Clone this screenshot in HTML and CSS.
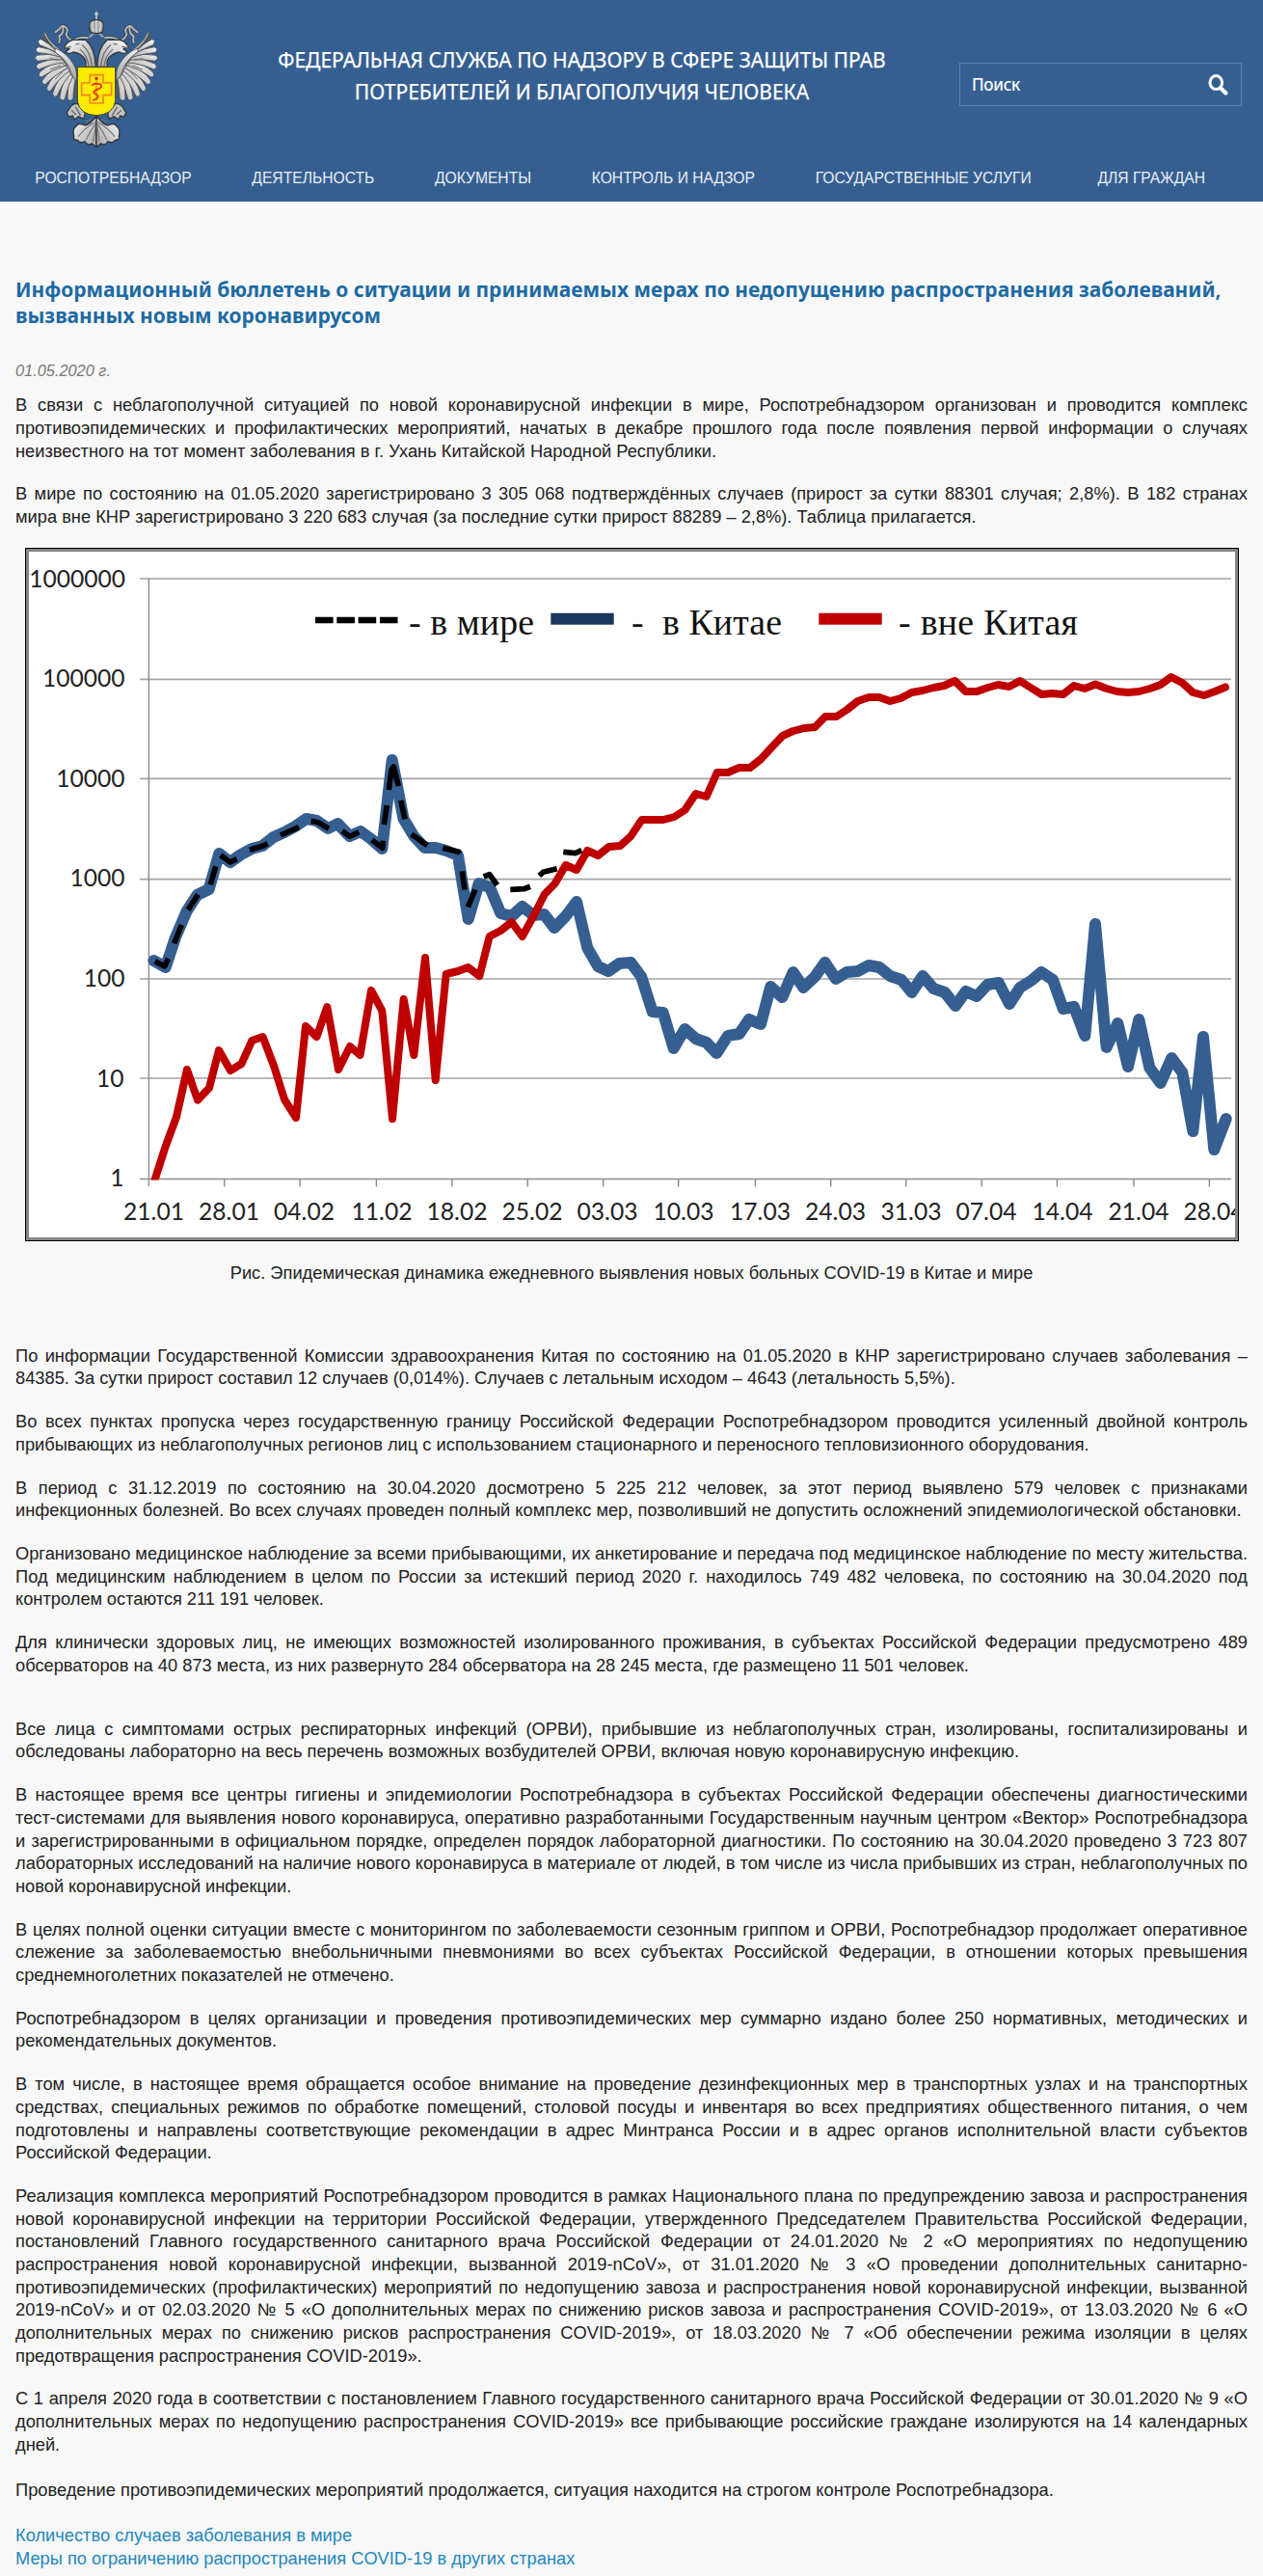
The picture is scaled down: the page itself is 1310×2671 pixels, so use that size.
FILE: index.html
```html
<!DOCTYPE html>
<html lang="ru">
<head>
<meta charset="utf-8">
<title>Информационный бюллетень</title>
<link rel="stylesheet" href="styles.css">
</head>
<body>
<header class="header">
  <div class="header-top">
    <svg class="logo" viewBox="0 0 480 480" role="img" aria-label="Герб">
      <defs>
        <linearGradient id="silver" x1="0" y1="0" x2="1" y2="1">
          <stop offset="0" stop-color="#fafafa"/><stop offset="1" stop-color="#a6a6a6"/>
        </linearGradient>
        <g id="half" stroke-linejoin="round" stroke-linecap="round">
          <!-- ribbon -->
          <path d="M213 118 Q190 112 172 124 M160 124 Q140 112 150 96 Q148 82 134 80 Q126 92 112 100 M136 82 Q140 104 124 112 Q128 124 124 132" fill="none" stroke="#2f3a48" stroke-width="10"/>
          <path d="M213 118 Q190 112 172 124 M160 124 Q140 112 150 96 Q148 82 134 80 Q126 92 112 100 M136 82 Q140 104 124 112 Q128 124 124 132" fill="none" stroke="#b5b5b5" stroke-width="6"/>
          <!-- wing -->
          <path d="M74 98 Q84 130 118 152 Q165 185 178 225 L176 300 L150 300 L100 250 L70 150Z" fill="#55585c"/>
          <g fill="url(#silver)" stroke="#44484d" stroke-width="2.5">
            <path d="M178 232 Q170 262 168 306 Q158 320 150 306 Q150 262 160 226Z"/>
            <path d="M172 228 Q152 262 142 308 Q130 318 126 302 Q132 256 158 220Z"/>
            <path d="M166 224 Q136 254 118 298 Q106 306 104 290 Q116 248 152 214Z"/>
            <path d="M160 218 Q122 244 98 282 Q86 288 86 272 Q102 234 146 206Z"/>
            <path d="M154 210 Q112 232 82 262 Q68 264 72 250 Q92 218 140 196Z"/>
            <path d="M148 202 Q104 216 70 240 Q56 238 64 224 Q90 200 134 188Z"/>
            <path d="M142 194 Q96 200 62 216 Q46 210 58 198 Q90 184 128 180Z"/>
            <path d="M136 186 Q92 184 58 190 Q42 180 56 172 Q90 166 122 172Z"/>
            <path d="M130 178 Q88 166 58 164 Q44 152 60 146 Q92 150 118 164Z"/>
            <path d="M126 170 Q88 148 64 140 Q52 124 68 122 Q94 136 114 156Z"/>
            <path d="M122 162 Q86 130 74 98 Q82 100 86 112 Q98 136 128 154Z"/>
            <path d="M112 150 Q150 165 170 202 Q182 222 177 252 Q160 236 152 212 Q142 182 112 162Z"/>
          </g>
          <path d="M124 172 Q150 190 160 220 M136 198 Q160 215 168 240 M120 186 L96 182 M128 204 L98 216 M140 218 L112 246" stroke="#6b6e72" stroke-width="3" fill="none"/>
          <!-- claw -->
          <path d="M180 322 Q166 322 158 334 L148 350 L154 364 L166 360 L172 372 L184 362 L200 370 L205 354 Q196 334 180 322Z" fill="#c4c4c4" stroke="#33373c" stroke-width="4"/>
          <path d="M164 344 L176 356 M176 334 L190 358" stroke="#666" stroke-width="4" fill="none"/>
          <!-- head and neck -->
          <path d="M140 148 Q148 128 168 124 L206 124 Q236 150 238 208 L206 208 Q212 184 190 170 Q176 162 168 162 Q154 170 144 162 L156 152Z" fill="url(#silver)" stroke="#33373c" stroke-width="4"/>
          <path d="M142 149 L160 145 M176 138 L186 136 M196 140 Q222 160 226 206 M190 154 Q212 172 216 206" stroke="#666" stroke-width="3.5" fill="none"/>
          <!-- tail -->
          <path d="M240 360 Q222 386 204 390 Q182 380 178 392 Q164 400 170 424 Q166 436 182 436 Q190 448 204 440 Q214 456 226 446 L240 458Z" fill="url(#silver)" stroke="#33373c" stroke-width="4"/>
          <path d="M234 380 Q200 402 184 424 M236 386 Q218 412 208 434 M238 390 L230 440 M222 372 L208 378" stroke="#777" stroke-width="3.5" fill="none"/>
        </g>
      </defs>
      <use href="#half"/>
      <use href="#half" transform="translate(480 0) scale(-1 1)"/>
      <path d="M218 116 L232 103 L248 103 L262 116" fill="none" stroke="#b0b0b0" stroke-width="5"/>
      <path d="M222 100 Q212 70 226 64 L240 60 L254 64 Q268 70 258 100 Q240 108 222 100Z" fill="#aaa" stroke="#33373c" stroke-width="4"/>
      <path d="M229 68 Q224 84 230 98 M251 68 Q256 84 250 98 M240 64 V100" fill="none" stroke="#ececec" stroke-width="3"/>
      <path d="M240 36 V60 M234 44 H246" stroke="#c8c8c8" stroke-width="5"/>
      <path d="M181 209 H299 V315 Q292 357 240 359 Q188 357 181 315Z" fill="#fcec00" stroke="#45401c" stroke-width="3"/>
      <path d="M220 233 H261 V258 H287 V296 H261 V321 H220 V296 H194 V258 H220Z" fill="none" stroke="#f5841f" stroke-width="5"/>
      <path d="M240 240 V312" stroke="#f26a1b" stroke-width="3"/>
      <circle cx="240" cy="244" r="5" fill="#e01010"/>
      <path d="M226 266 Q234 256 252 262 Q262 270 246 277 Q224 284 236 292 Q252 296 240 308 L228 312" fill="none" stroke="#e8291a" stroke-width="5"/>
    </svg>
    <div class="agency">ФЕДЕРАЛЬНАЯ СЛУЖБА ПО НАДЗОРУ В СФЕРЕ ЗАЩИТЫ ПРАВ<br>ПОТРЕБИТЕЛЕЙ И БЛАГОПОЛУЧИЯ ЧЕЛОВЕКА</div>
    <div class="search">
      <span>Поиск</span>
      <svg class="search-icon" viewBox="0 0 21 22"><ellipse cx="8.3" cy="8.6" rx="6.3" ry="7" fill="none" stroke="#fff" stroke-width="3"/><path d="M13 14.2 L18.4 19.6" stroke="#fff" stroke-width="4.2" stroke-linecap="round"/></svg>
    </div>
  </div>
  <nav class="nav">
    <a>РОСПОТРЕБНАДЗОР</a><a>ДЕЯТЕЛЬНОСТЬ</a><a>ДОКУМЕНТЫ</a><a>КОНТРОЛЬ И НАДЗОР</a><a>ГОСУДАРСТВЕННЫЕ УСЛУГИ</a><a>ДЛЯ ГРАЖДАН</a>
  </nav>
</header>
<main class="content">
  <h1>Информационный бюллетень о ситуации и принимаемых мерах по недопущению распространения заболеваний, вызванных новым коронавирусом</h1>
  <div class="date">01.05.2020 г.</div>
  <p>В связи с неблагополучной ситуацией по новой коронавирусной инфекции в мире, Роспотребнадзором организован и проводится комплекс противоэпидемических и профилактических мероприятий, начатых в декабре прошлого года после появления первой информации о случаях неизвестного на тот момент заболевания в г. Ухань Китайской Народной Республики.</p>
  <p>В мире по состоянию на 01.05.2020 зарегистрировано 3 305 068 подтверждённых случаев (прирост за сутки 88301 случая; 2,8%). В 182 странах <span class="keep">мира вне</span> КНР зарегистрировано 3 220 683 случая (за последние сутки прирост 88289 – 2,8%). Таблица прилагается.</p>
  <svg class="chart" viewBox="26 568 1259 719">
    <rect x="26" y="568" width="1259" height="719" fill="#000"/>
    <rect x="27" y="569" width="1257" height="717" fill="#858585"/>
    <rect x="30" y="572" width="1251" height="711" fill="#fff"/>
    <path class="grid" d="M145 600H1277M145 704.4H1277M145 807.4H1277M145 911.6H1277M145 1015H1277M145 1118H1277"/>
    <path class="axis" d="M154.4 600V1230M145 1222.5H1277M232.7 1222V1230.5M311 1222V1230.5M390.4 1222V1230.5M469 1222V1230.5M547.3 1222V1230.5M625.6 1222V1230.5M703.7 1222V1230.5M783.4 1222V1230.5M861.7 1222V1230.5M939.8 1222V1230.5M1018.3 1222V1230.5M1096.4 1222V1230.5M1176 1222V1230.5M1254.4 1222V1230.5"/>
    <polyline class="china" points="159.5,996 171.7,1003 182,972 193.5,945 204.5,928 216.7,922 227.3,885 238.7,894 250,886 261.3,880 272.3,877 283.7,868 295,863 306,857 317.7,849 328.5,851 340.3,859 350.3,854 362.7,867 374,862 385,870 396.3,880 406.7,788 418.5,849 429.3,867 440.5,879 451.7,879 462.7,882 475,887 485.7,953 496.7,916 508,920 519.3,947 530.7,950 541.7,940 553.3,949 564.3,948 575,962 586.7,950 598,935 609.3,983 620.3,1002 631,1007 642.3,999 654.3,998 665.3,1013 676.7,1049 687.7,1050 698.7,1087 710.3,1067 721.7,1077 732.7,1081 743.3,1092 755,1074 766.7,1072 777,1057 789,1062 799.3,1023 811.3,1034 822.7,1008 833.3,1024 845,1013 855.7,998 867,1015 878.3,1008 889.7,1007 901,1001 912,1003 923.3,1012 935,1016 945.7,1029 957,1012 968.3,1025 980,1029 991,1043 1001.7,1028 1013,1033 1024.3,1021 1035.7,1019 1047,1041 1058,1024 1069.3,1017 1080,1008 1092,1016 1102.7,1046 1114,1044 1125.3,1074 1136,958 1147.7,1086 1159.3,1061 1170,1106 1181.3,1057 1192.3,1107 1203.7,1123 1215.3,1097 1226.3,1112 1237.3,1173 1248,1075 1259.3,1192 1271.7,1160"/>
    <path class="world" d="M160.7 996.7L170.7 1002L174.5 994M180.7 978.3L188.3 959M195 943.3L205.5 927.5M218.3 917.3L223.7 898.3M228.7 886.7L238.7 894L245.7 890.7M259 881.3L272.3 877.3L277.7 874.7M291 866L310 857.7M322.7 851.3L330 852.7L341 859.3M355 861.7L362.7 867.3L372.3 862.7M385.7 871L396.7 879.3L397.3 871.7M398.3 855L401.3 835M403.3 819L406 798.3L408.3 795L413.3 815M415.7 830L420 849.3M426.7 865L443.3 876.7M459.3 879.3L475.7 883.3L477.3 885M479.3 903.3L482 922.7M485.3 940.5L493 922.5M501.7 909L507.7 906.7L515.7 917.7M529.3 922.3L543.3 921.7L550 919.3M559.3 908L563.3 904.3L577.7 900.7M584.3 883.3L596.7 884.7L603.3 881.7"/>
    <polyline class="other" points="160.6,1223 171.6,1189 183,1158 194,1109 205,1140.7 217,1128 227,1089 239,1110 250.5,1103 261.3,1079 272.5,1075 284,1105 295,1140 307,1159 317,1064 328.5,1075 339.3,1044 351,1109 363,1085 373.5,1094 385,1027 396.3,1048 407,1160 418.7,1036 429.3,1094 441,993 451.7,1120 462.7,1010 475,1007 485.5,1003 497.3,1012 507.7,971 519.3,965 530.7,956 541.7,971 553.3,950 565,927 575.7,916 586.7,897 598,902 609.3,882 620.3,887 631.7,878 643.3,877 654.3,867 665.7,850 676.7,850 688,850 699.3,847 710.3,840 721.7,823 732.7,826 743.7,801 755,801 766.7,796 778,796 789.3,787 800.3,775 811.7,763 822.7,758 834,755 845.3,754 856,743 867.5,743 878.3,736 889.7,727 901,723 912,723 923.3,727 934.3,724 945.7,718 957,716 968.3,713 979.3,711 990.3,706 1001.7,717 1013,717 1024.3,713 1035.3,710 1046.7,712 1058,706 1069,713 1080.3,720 1091.3,719 1102.7,720 1114,711 1125,714 1136.3,709.5 1147.7,714 1158.7,717 1170,718 1181.3,717 1192.7,714 1203.7,710 1214.7,702 1226.3,708 1237.3,718 1248.7,721 1260,717 1271,712.5"/>
    <rect x="155" y="1223.6" width="14" height="5" fill="#fff"/>
    <g class="ylab">
      <text x="130" y="609">1000000</text><text x="129.5" y="711.5">100000</text><text x="129.5" y="816">10000</text><text x="129.5" y="919">1000</text><text x="129.5" y="1023">100</text><text x="128.5" y="1126.5">10</text><text x="128.5" y="1230">1</text>
    </g>
    <svg x="30" y="572" width="1251" height="711" viewBox="30 572 1251 711">
    <g class="xlab">
      <text x="159.5" y="1265">21.01</text><text x="237.5" y="1265">28.01</text><text x="315.5" y="1265">04.02</text><text x="396" y="1265">11.02</text><text x="474" y="1265">18.02</text><text x="552" y="1265">25.02</text><text x="630" y="1265">03.03</text><text x="709" y="1265">10.03</text><text x="788.5" y="1265">17.03</text><text x="866.5" y="1265">24.03</text><text x="945" y="1265">31.03</text><text x="1023" y="1265">07.04</text><text x="1102" y="1265">14.04</text><text x="1181" y="1265">21.04</text><text x="1259" y="1265">28.04</text>
    </g>
    </svg>
    <path d="M327 643H412.5" stroke="#000" stroke-width="6.6" stroke-dasharray="18.6 3.7"/>
    <rect x="571.3" y="635.7" width="65.4" height="12" fill="#1b375f"/>
    <rect x="849.3" y="635.7" width="65.4" height="12" fill="#be0000"/>
    <g class="legend">
      <text x="424" y="658" textLength="130">- в мире</text><text x="655" y="658" textLength="156" xml:space="preserve">-  в Китае</text><text x="932" y="658" textLength="186">- вне Китая</text>
    </g>
  </svg>
  <p class="caption">Рис. Эпидемическая динамика ежедневного выявления новых больных COVID-19 в Китае и мире</p>
  <p>По информации Государственной Комиссии здравоохранения Китая по состоянию на 01.05.2020 в КНР зарегистрировано случаев заболевания – 84385. За сутки прирост составил 12 случаев (0,014%). Случаев с летальным исходом – 4643 (летальность 5,5%).</p>
  <p>Во всех пунктах пропуска через государственную границу Российской Федерации Роспотребнадзором проводится усиленный двойной контроль прибывающих из неблагополучных регионов лиц с использованием стационарного и переносного тепловизионного оборудования.</p>
  <p>В период с 31.12.2019 по состоянию на 30.04.2020 досмотрено 5 225 212 человек, за этот период выявлено 579 человек с признаками <span class="keep">инфекционных болезней.</span> Во всех случаях проведен полный комплекс мер, позволивший не допустить осложнений эпидемиологической обстановки.</p>
  <p class="tight">Организовано медицинское наблюдение за всеми прибывающими, их анкетирование и передача под медицинское наблюдение по месту жительства. Под медицинским наблюдением в целом по России за истекший период 2020 г. находилось 749 482 человека, по состоянию на 30.04.2020 под <span class="keep">контролем остаются</span> 211 191 человек.</p>
  <p>Для клинически здоровых лиц, не имеющих возможностей изолированного проживания, в субъектах Российской Федерации предусмотрено 489 обсерваторов на 40 873 места, из них развернуто 284 обсерватора на 28 245 места, где размещено 11 501 человек.</p>
  <p class="spaced">Все лица с симптомами острых респираторных инфекций (ОРВИ), прибывшие из неблагополучных стран, изолированы, госпитализированы и обследованы лабораторно на весь перечень возможных возбудителей ОРВИ, включая новую коронавирусную инфекцию.</p>
  <p class="tight">В настоящее время все центры гигиены и эпидемиологии Роспотребнадзора в субъектах Российской Федерации обеспечены диагностическими <span class="keep">тест-системами</span> для выявления нового коронавируса, оперативно разработанными Государственным научным центром «Вектор» Роспотребнадзора <span class="keep">и зарегистрированными</span> в официальном порядке, определен порядок лабораторной диагностики. По состоянию на 30.04.2020 проведено 3 723 807 лабораторных исследований на наличие нового коронавируса в материале от людей, в том числе из числа прибывших из стран, неблагополучных по новой коронавирусной инфекции.</p>
  <p>В целях полной оценки ситуации вместе с мониторингом по заболеваемости сезонным гриппом и ОРВИ, Роспотребнадзор продолжает оперативное слежение за заболеваемостью внебольничными пневмониями во всех субъектах Российской Федерации, в отношении которых превышения среднемноголетних показателей не отмечено.</p>
  <p>Роспотребнадзором в целях организации и проведения противоэпидемических мер суммарно издано более 250 нормативных, методических и рекомендательных документов.</p>
  <p>В том числе, в настоящее время обращается особое внимание на проведение дезинфекционных мер в транспортных узлах и на транспортных средствах, специальных режимов по обработке помещений, столовой посуды и инвентаря во всех предприятиях общественного питания, о чем подготовлены и направлены соответствующие рекомендации в адрес Минтранса России и в адрес органов исполнительной власти субъектов Российской Федерации.</p>
  <p>Реализация комплекса мероприятий Роспотребнадзором проводится в рамках Национального плана по предупреждению завоза и распространения новой коронавирусной инфекции на территории Российской Федерации, утвержденного Председателем Правительства Российской Федерации, постановлений Главного государственного санитарного врача Российской Федерации от 24.01.2020 № 2 «О мероприятиях по недопущению распространения новой коронавирусной инфекции, вызванной 2019-nCoV», от 31.01.2020 № 3 «О проведении дополнительных санитарно-противоэпидемических (профилактических) мероприятий по недопущению завоза и распространения новой коронавирусной инфекции, вызванной 2019-nCoV» и от 02.03.2020 № 5 «О дополнительных мерах по снижению рисков завоза и распространения COVID-2019», от 13.03.2020 № 6 «О дополнительных мерах по снижению рисков распространения COVID-2019», от 18.03.2020 № 7 «Об обеспечении режима изоляции в целях предотвращения распространения COVID-2019».</p>
  <p>С 1 апреля 2020 года в соответствии с постановлением Главного государственного санитарного врача Российской Федерации от 30.01.2020 № 9 «О дополнительных мерах по недопущению распространения COVID-2019» все прибывающие российские граждане изолируются на 14 календарных дней.<br><br>Проведение противоэпидемических мероприятий продолжается, ситуация находится на строгом контроле Роспотребнадзора.<br><br><a class="link">Количество случаев заболевания в мире</a><br><a class="link">Меры по ограничению распространения COVID-19 в других странах</a></p>
</main>
</body>
</html>
```
FILE: styles.css
```css
body {
  margin: 0;
  background: #f8f8f8;
  color: #222;
  font: 18.27px/23.66px "Liberation Sans", Arial, sans-serif;
}
.header {
  height: 209px;
  background: #365f91;
  color: #fff;
}
.header-top {
  display: grid;
  grid-template-columns: 160px 1fr 293px;
  height: 175px;
  padding: 0 22px 0 20px;
  align-items: start;
}
.logo { width: 160px; height: 160px; display: block; }
.agency {
  margin-top: 46px;
  padding-left: 32px;
  text-align: center;
  white-space: nowrap;
  font: 21px/33px "Noto Sans", sans-serif;
  -webkit-text-stroke: 0.25px #fff;
}
.search {
  box-sizing: border-box;
  height: 45px;
  margin-top: 65px;
  padding: 0 13px 0 12px;
  border: 1px solid #5a83b8;
  display: flex;
  justify-content: space-between;
  align-items: center;
  font: 17.2px/22px "Noto Sans", sans-serif;
  letter-spacing: -0.25px;
  -webkit-text-stroke: 0.2px #fff;
}
.search-icon { width: 21px; height: 22px; }
.nav {
  display: flex;
  gap: 62.7px;
  padding-left: 36.3px;
  font-size: 15.65px;
  line-height: 20px;
  color: #e9eef4;
  white-space: nowrap;
}
.nav a:last-child { margin-left: 6px; }
.content { padding: 78px 16px 0; }
h1 {
  margin: 0 0 33.4px;
  color: #1d6aa3;
  font: bold 20.94px/27.04px "Noto Sans", sans-serif;
}
.date {
  margin-bottom: 12.8px;
  color: #777;
  font-size: 16.35px;
  line-height: 21px;
  font-style: italic;
}
p { margin: 0 0 21.15px; text-align: justify; }
.keep { white-space: nowrap; }
.tight { word-spacing: -0.3px; }
.chart { display: block; width: 1259px; height: 719px; margin: -0.9px 0 20.8px 10px; }
.caption { text-align: center; margin-bottom: 62.3px; }
.spaced { margin-top: 42.3px; }
.link { color: #1f87bd; }

.grid { fill: none; stroke: #a3a3a3; stroke-width: 1.7; }
.axis { fill: none; stroke: #8a8a8a; stroke-width: 1.4; }
.china, .other, .world { fill: none; stroke-linejoin: round; stroke-linecap: round; }
.china { stroke: #365f91; stroke-width: 12; }
.other { stroke: #be0000; stroke-width: 8; }
.world { stroke: #000; stroke-width: 5.7; stroke-linecap: butt; }
.ylab, .xlab { font: 24.6px Lato, sans-serif; fill: #222; }
.ylab { text-anchor: end; }
.xlab { text-anchor: middle; }
.legend { font: 37.8px "Liberation Serif", serif; fill: #111; }
```
